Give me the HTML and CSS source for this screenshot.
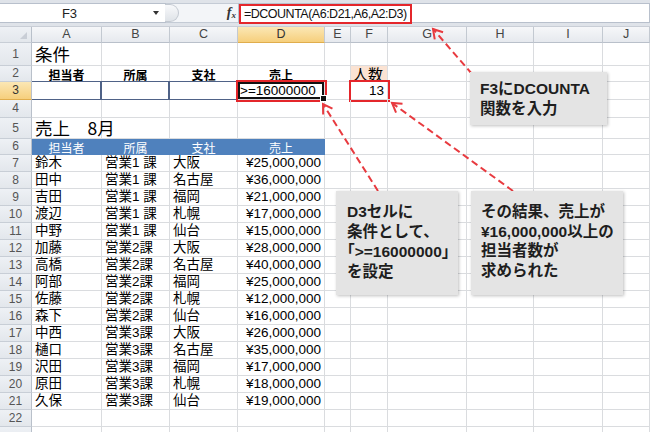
FILE: index.html
```html
<!DOCTYPE html>
<html lang="ja">
<head>
<meta charset="utf-8">
<title>DCOUNTA</title>
<link rel="stylesheet" href="styles.css">
</head>
<body>
<div class="app">
  <div class="fbar">
    <div class="namebox"><span class="nm">F3</span><span class="dd"></span></div>
    <div class="ctrl"><span class="knob"></span><span class="fx">f<sub>x</sub></span></div>
    <div class="formula"><span class="fbox">=DCOUNTA(A6:D21,A6,A2:D3)</span></div>
  </div>
  <div class="sheet">
    <div class="r hr"><div class="corner"></div><div>A</div><div>B</div><div>C</div><div class="sel">D</div><div>E</div><div>F</div><div>G</div><div>H</div><div>I</div><div>J</div></div>
    <div class="r r1"><div>1</div><div class="big">条件</div><div></div><div></div><div></div><div></div><div></div><div></div><div></div><div></div><div></div></div>
    <div class="r r2"><div>2</div><div class="th">担当者</div><div class="th">所属</div><div class="th">支社</div><div class="th">売上</div><div></div><div class="ninzu">人数</div><div></div><div></div><div></div><div></div></div>
    <div class="r r3"><div class="sel">3</div><div class="crit"></div><div class="crit"></div><div class="crit"></div><div class="active">&gt;=16000000</div><div></div><div class="res">13</div><div></div><div></div><div></div><div></div></div>
    <div class="r r4"><div>4</div><div></div><div></div><div></div><div></div><div></div><div></div><div></div><div></div><div></div><div></div></div>
    <div class="r r5"><div>5</div><div class="big">売上　8月</div><div></div><div></div><div></div><div></div><div></div><div></div><div></div><div></div><div></div></div>
    <div class="r r6"><div>6</div><div class="bh">担当者</div><div class="bh">所属</div><div class="bh">支社</div><div class="bh">売上</div><div></div><div></div><div></div><div></div><div></div><div></div></div>
    <div class="r d"><div>7</div><div>鈴木</div><div>営業1 課</div><div>大阪</div><div class="y">¥25,000,000</div><div></div><div></div><div></div><div></div><div></div><div></div></div>
    <div class="r d"><div>8</div><div>田中</div><div>営業1 課</div><div>名古屋</div><div class="y">¥36,000,000</div><div></div><div></div><div></div><div></div><div></div><div></div></div>
    <div class="r d"><div>9</div><div>吉田</div><div>営業1 課</div><div>福岡</div><div class="y">¥21,000,000</div><div></div><div></div><div></div><div></div><div></div><div></div></div>
    <div class="r d"><div>10</div><div>渡辺</div><div>営業1 課</div><div>札幌</div><div class="y">¥17,000,000</div><div></div><div></div><div></div><div></div><div></div><div></div></div>
    <div class="r d"><div>11</div><div>中野</div><div>営業1 課</div><div>仙台</div><div class="y">¥15,000,000</div><div></div><div></div><div></div><div></div><div></div><div></div></div>
    <div class="r d"><div>12</div><div>加藤</div><div>営業2課</div><div>大阪</div><div class="y">¥28,000,000</div><div></div><div></div><div></div><div></div><div></div><div></div></div>
    <div class="r d"><div>13</div><div>高橋</div><div>営業2課</div><div>名古屋</div><div class="y">¥40,000,000</div><div></div><div></div><div></div><div></div><div></div><div></div></div>
    <div class="r d"><div>14</div><div>阿部</div><div>営業2課</div><div>福岡</div><div class="y">¥25,000,000</div><div></div><div></div><div></div><div></div><div></div><div></div></div>
    <div class="r d"><div>15</div><div>佐藤</div><div>営業2課</div><div>札幌</div><div class="y">¥12,000,000</div><div></div><div></div><div></div><div></div><div></div><div></div></div>
    <div class="r d"><div>16</div><div>森下</div><div>営業2課</div><div>仙台</div><div class="y">¥16,000,000</div><div></div><div></div><div></div><div></div><div></div><div></div></div>
    <div class="r d"><div>17</div><div>中西</div><div>営業3課</div><div>大阪</div><div class="y">¥26,000,000</div><div></div><div></div><div></div><div></div><div></div><div></div></div>
    <div class="r d"><div>18</div><div>樋口</div><div>営業3課</div><div>名古屋</div><div class="y">¥35,000,000</div><div></div><div></div><div></div><div></div><div></div><div></div></div>
    <div class="r d"><div>19</div><div>沢田</div><div>営業3課</div><div>福岡</div><div class="y">¥17,000,000</div><div></div><div></div><div></div><div></div><div></div><div></div></div>
    <div class="r d"><div>20</div><div>原田</div><div>営業3課</div><div>札幌</div><div class="y">¥18,000,000</div><div></div><div></div><div></div><div></div><div></div><div></div></div>
    <div class="r d"><div>21</div><div>久保</div><div>営業3課</div><div>仙台</div><div class="y">¥19,000,000</div><div></div><div></div><div></div><div></div><div></div><div></div></div>
    <div class="r d"><div>22</div><div></div><div></div><div></div><div></div><div></div><div></div><div></div><div></div><div></div><div></div></div>
    <div class="r d"><div></div><div></div><div></div><div></div><div></div><div></div><div></div><div></div><div></div><div></div><div></div></div>
  </div>
  <svg class="arrows" width="650" height="432" viewBox="0 0 650 432">
    <defs>
      <marker id="ah" markerWidth="14" markerHeight="14" refX="11" refY="7" orient="auto" markerUnits="userSpaceOnUse">
        <path d="M2,1.5 L11,7 L2,12.5" fill="none" stroke="#e83a3f" stroke-width="2"/>
      </marker>
    </defs>
    <line x1="472" y1="74" x2="433" y2="29" class="dl" marker-end="url(#ah)"/>
    <line x1="378" y1="191" x2="323" y2="104" class="dl" marker-end="url(#ah)"/>
    <line x1="513" y1="191" x2="392" y2="103" class="dl" marker-end="url(#ah)"/>
  </svg>
  <div class="note n1">F3にDCOUNTA<br>関数を入力</div>
  <div class="note n2">D3セルに<br>条件として、<br><span class="br">「</span>&gt;=16000000<span class="br">」</span><br>を設定</div>
  <div class="note n3">その結果、売上が<br>¥16,000,000以上の<br>担当者数が<br>求められた</div>
</div>
</body>
</html>
```

FILE: styles.css
```css
* { box-sizing: border-box; }
html, body { margin: 0; padding: 0; }
body {
  width: 650px;
  height: 432px;
  overflow: hidden;
  background: #ffffff;
  font-family: "Liberation Sans", "Noto Sans CJK JP", sans-serif;
}
.app {
  position: relative;
  width: 650px;
  height: 432px;
  overflow: hidden;
}

/* formula bar */
.fbar {
  height: 27px;
  padding-top: 3px;
  background: #dfe3e9;
  display: flex;
  border-bottom: 1px solid #c9ced6;
}
.namebox {
  width: 166px;
  height: 20px;
  background: #ffffff;
  border: 1px solid #b8c0cc;
  border-left: none;
  display: flex;
  align-items: center;
}
.nm {
  flex: 1;
  text-align: center;
  font-size: 13px;
  color: #222;
  padding-right: 14px;
}
.dd {
  width: 0;
  height: 0;
  border-left: 3.5px solid transparent;
  border-right: 3.5px solid transparent;
  border-top: 4px solid #333;
  margin-right: 6px;
}
.ctrl {
  width: 72px;
  height: 20px;
  background: #f3f5f8;
  border-top: 1px solid #c4cbd5;
  border-bottom: 1px solid #c4cbd5;
  display: flex;
  align-items: center;
  justify-content: space-between;
  padding-right: 2px;
}
.knob {
  width: 14px;
  height: 18px;
  border: 1px solid #c3c9d1;
  border-left: none;
  border-radius: 0 10px 10px 0;
  background: linear-gradient(#f8f9fb, #dfe3e8);
  margin-left: -1px;
}
.fx {
  font-family: "Liberation Serif", serif;
  font-style: italic;
  font-weight: bold;
  font-size: 14px;
  color: #333;
  line-height: 1;
}
.fx sub { font-size: 9px; vertical-align: -1px; }
.formula {
  flex: 1;
  height: 20px;
  background: #ffffff;
  border: 1px solid #b8c0cc;
}
.fbox {
  display: inline-block;
  height: 20px;
  margin-top: -1px;
  padding: 0 3px 0 3px;
  border: 2px solid #e4262b;
  font-size: 12.5px;
  line-height: 16px;
  color: #111;
  letter-spacing: -0.5px;
}

/* sheet */
.sheet { background: #ffffff; }
.r {
  display: grid;
  grid-template-columns: 32px 70px 68px 68px 87px 26px 37px 79px 67px 69px 47px;
  grid-template-rows: 100%;
}
.r > div {
  border-right: 1px solid #dadcdf;
  border-bottom: 1px solid #dadcdf;
  white-space: nowrap;
  font-size: 13.5px;
  color: #000;
  padding-left: 3px;
  min-height: 0;
}
.r > div:first-child {
  background: linear-gradient(#eef1f5, #e3e7ec);
  border-right: 1px solid #b9c0ca;
  border-bottom: 1px solid #c8ced6;
  color: #555;
  font-size: 12px;
  text-align: center;
  padding-left: 0;
  font-family: "Liberation Sans", sans-serif;
}
.r > div.sel {
  background: linear-gradient(#fbe7b5, #f6cf7c);
  border-bottom-color: #e0ad4c;
  color: #333;
}
.hr { height: 16px; }
.hr > div {
  background: linear-gradient(#f6f7f9, #e6e9ee);
  border-right: 1px solid #c3c9d1;
  border-bottom: 1px solid #b9c0ca;
  text-align: center;
  color: #444;
  font-size: 12.5px;
  line-height: 15px;
  padding-left: 0;
}
.hr > div.corner {
  position: relative;
  background: linear-gradient(#eef1f5, #e3e7ec);
}
.corner::after {
  content: "";
  position: absolute;
  right: 4px;
  bottom: 3px;
  border-left: 7px solid transparent;
  border-bottom: 7px solid #c9ced6;
}
.r1 { height: 23px; }
.r1 > div { line-height: 22px; }
.r2 { height: 16px; }
.r2 > div { line-height: 15px; }
.r3 { height: 18px; }
.r3 > div { line-height: 17px; }
.r4 { height: 18px; }
.r4 > div { line-height: 17px; }
.r5 { height: 21px; }
.r5 > div { line-height: 20px; }
.r6 { height: 16px; }
.r6 > div { line-height: 15px; }
.d { height: 17px; }
.d > div { line-height: 16px; }

.big {
  font-size: 17.5px !important;
  overflow: visible;
  font-family: "Noto Sans CJK JP", sans-serif;
  color: #111;
}
.r1 > div.big { line-height: 21px; }
.r5 > div.big { line-height: 18px; padding-top: 1px; }
.th {
  font-weight: bold;
  font-size: 12px !important;
  text-align: center;
  padding-left: 0 !important;
  font-family: "Noto Sans CJK JP", sans-serif;
}
.r2 > div.th { line-height: 17px; }
.ninzu {
  background: #fbe3d3;
  font-size: 15px !important;
  line-height: 16px !important;
  font-family: "Noto Sans CJK JP", sans-serif;
  padding-left: 2px !important;
}
.r3 > div.crit {
  border-top: 1px solid #4f6287;
  border-bottom: 1px solid #4f6287;
  border-right: 2px solid #4f6287;
  margin-top: -1px;
}
.active {
  position: relative;
  outline: 2px solid #e4262b;
  box-shadow: inset 0 0 0 2px #111;
  padding-left: 2px !important;
}
.active::after {
  content: "";
  position: absolute;
  right: -3px;
  bottom: -3px;
  width: 5px;
  height: 5px;
  background: #111;
  border: 1px solid #fff;
}
.res {
  outline: 2px solid #e4262b;
  text-align: right;
  padding-right: 3px;
}
.r6 > div.bh {
  background: #4f81bd;
  border-right-color: #4f81bd;
  border-bottom-color: #4f81bd;
  color: #ffffff;
  text-align: center;
  font-size: 12px;
  line-height: 17px;
  padding-left: 0;
  font-family: "Noto Sans CJK JP", sans-serif;
}
.d > div.y {
  text-align: right;
  padding-right: 3px;
  padding-left: 0;
}

/* annotations */
.arrows {
  position: absolute;
  left: 0;
  top: 0;
  pointer-events: none;
}
.dl {
  stroke: #e83a3f;
  stroke-width: 2;
  stroke-dasharray: 7 4;
}
.note {
  position: absolute;
  background: #e4e4e4;
  box-shadow: 1px 1px 3px rgba(0, 0, 0, 0.25);
  font-family: "Liberation Sans", "Noto Sans CJK JP", sans-serif;
  font-weight: bold;
  font-size: 15.5px;
  line-height: 19.5px;
  color: #1e1e1e;
  white-space: nowrap;
}
.note .br {
  font-family: "Noto Sans CJK JP", sans-serif;
  font-feature-settings: "halt" 1;
}
.n1 { left: 470px; top: 72px; width: 137px; height: 53px; padding: 7px 0 0 10px; }
.n2 { left: 336px; top: 191px; width: 122px; height: 104px; padding: 11px 0 0 11px; }
.n3 { left: 471px; top: 191px; width: 152px; height: 104px; padding: 11px 0 0 10px; }
```
